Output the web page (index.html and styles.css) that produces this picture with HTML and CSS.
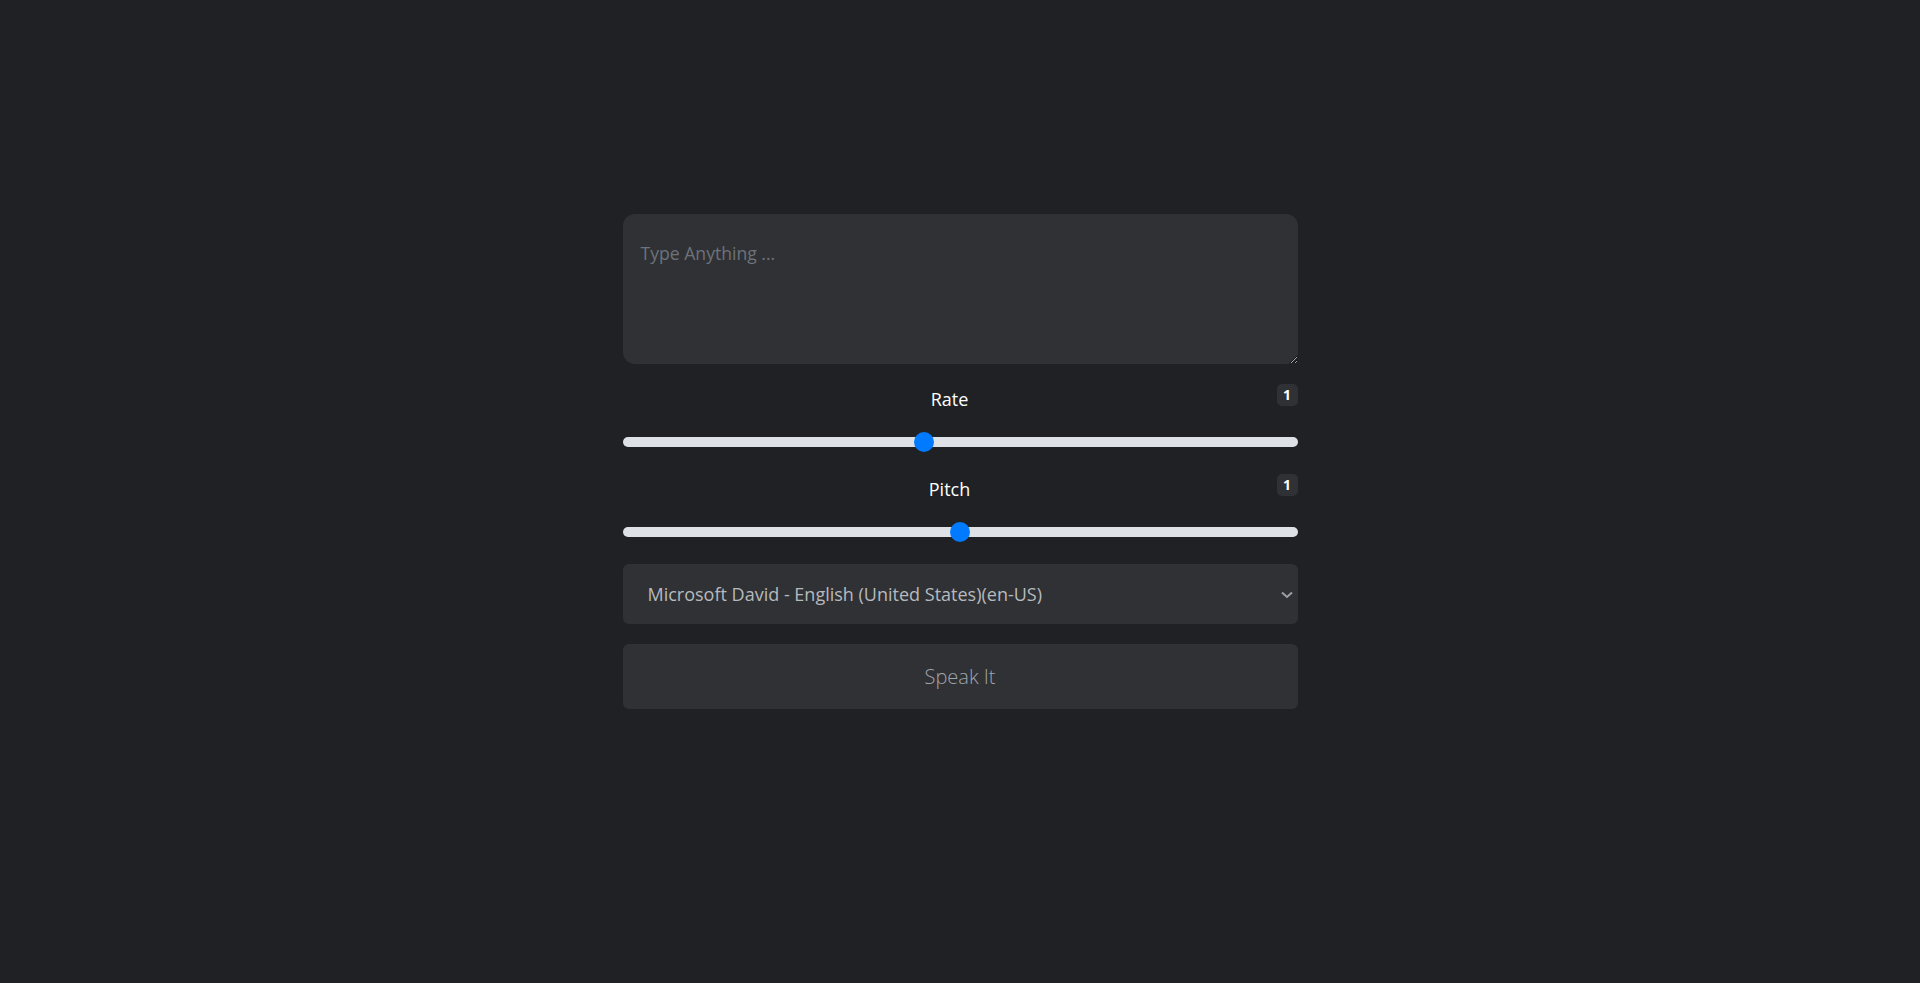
FILE: index.html
```html
<!DOCTYPE html>
<html lang="en">
<head>
<meta charset="utf-8">
<title>Speech Synthesis</title>
<link rel="stylesheet" href="styles.css">
</head>
<body>
<div class="container">
  <form class="speech-form">
    <textarea class="text-input" placeholder="Type Anything ..."></textarea>
    <div class="group">
      <div class="group-head">
        <span class="badge">1</span>
        <label class="group-label" for="rate">Rate</label>
      </div>
      <input class="range" type="range" id="rate" min="0.2" max="2" step="0.1" value="1">
    </div>
    <div class="group">
      <div class="group-head">
        <span class="badge">1</span>
        <label class="group-label" for="pitch">Pitch</label>
      </div>
      <input class="range" type="range" id="pitch" min="0" max="2" step="0.1" value="1">
    </div>
    <div class="select-wrap">
      <select class="voice-select">
        <option>Microsoft David - English (United States)(en-US)</option>
      </select>
      <svg class="chevron" width="12" height="8" viewBox="0 0 12 8"><path d="M1 1.5 L6 6 L11 1.5" fill="none" stroke="#9aa0a6" stroke-width="2"/></svg>
    </div>
    <button class="speak-btn" type="button">Speak It</button>
  </form>
</div>
</body>
</html>
```
FILE: styles.css
```css
html, body {
  margin: 0;
  padding: 0;
  background: #202124;
  font-family: "Open Sans", "Noto Sans", sans-serif;
  color: #fff;
}
.container {
  width: 675px;
  margin: 0 auto;
  padding-top: 214px;
}
.speech-form {
  display: flex;
  flex-direction: column;
}
.text-input {
  box-sizing: border-box;
  width: 100%;
  height: 150px;
  background: #303134;
  border: none;
  border-radius: 12px;
  padding: 26px 18px;
  font-family: "Open Sans", "Noto Sans", sans-serif;
  font-size: 17.6px;
  line-height: 1.5;
  color: #e8eaed;
  outline: none;
  margin: 0 0 20px 0;
  color-scheme: dark;
}
.text-input::placeholder {
  color: #6c737a;
}
.group {
  margin-bottom: 22px;
}
.group-head {
  text-align: center;
  height: 30px;
  line-height: 30px;
}
.group-label {
  font-size: 18px;
  font-weight: 500;
  color: #fff;
}
.badge {
  float: right;
  width: 21px;
  height: 22px;
  line-height: 22px;
  text-align: center;
  background: #303134;
  border-radius: 5px;
  font-size: 14px;
  font-weight: 700;
  color: #fff;
}
.range {
  -webkit-appearance: none;
  appearance: none;
  display: block;
  width: 100%;
  height: 20px;
  margin: 18px 0 0 0;
  padding: 0;
  background: transparent;
}
.range:focus { outline: none; }
.range::-webkit-slider-runnable-track {
  height: 10px;
  background: #dee2e6;
  border-radius: 5px;
}
.range::-webkit-slider-thumb {
  -webkit-appearance: none;
  appearance: none;
  width: 20px;
  height: 20px;
  margin-top: -5px;
  border-radius: 50%;
  background: #007bff;
  border: none;
}
.select-wrap {
  position: relative;
  margin-bottom: 20px;
}
.voice-select {
  -webkit-appearance: none;
  appearance: none;
  box-sizing: border-box;
  width: 100%;
  height: 60px;
  background: #303134;
  border: none;
  border-radius: 6px;
  padding: 0 30px 0 25px;
  font-family: "Open Sans", "Noto Sans", sans-serif;
  font-size: 18px;
  color: #b6babe;
  outline: none;
}
.chevron {
  position: absolute;
  right: 5px;
  top: 27px;
}
.speak-btn {
  box-sizing: border-box;
  width: 100%;
  height: 65px;
  background: #303134;
  border: none;
  border-radius: 6px;
  font-family: "Open Sans", "Noto Sans", sans-serif;
  font-size: 20px;
  font-weight: 300;
  color: #a0a5ab;
  cursor: pointer;
}
```
